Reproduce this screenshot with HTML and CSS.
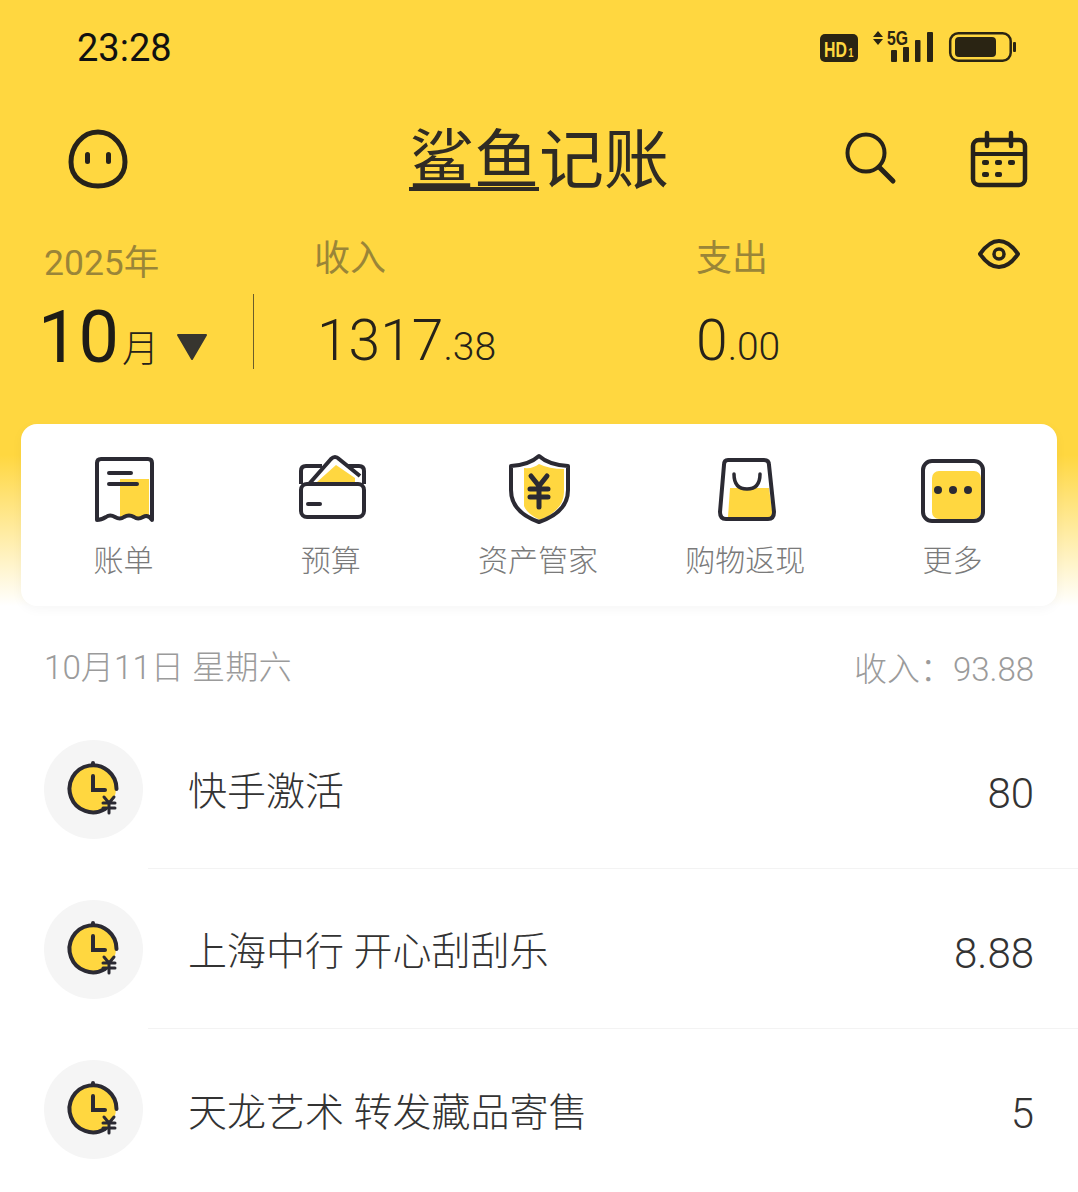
FILE: index.html
```html
<!DOCTYPE html>
<html>
	<head>
		<title>鲨鱼记账</title>
		<meta charset="utf-8" />
		<link rel="stylesheet" href="styles.css">
	</head>
	<body>
		<div id="app">
			<div class="header">
				<div class="status">
					<span class="time">23:28</span>
					<svg class="status-icons" width="200" height="36" viewBox="0 0 200 36">
						<rect x="2" y="6" width="38" height="28" rx="5" fill="#2a2413"/>
						<text class="hd" transform="translate(6 29) scale(.72 1)">HD<tspan class="hd-one" dx="2">1</tspan></text>
						<path d="M55 9 L60 3 L65 9 Z M55 11 L60 17 L65 11 Z" fill="#2a2413"/>
						<text x="69" y="17" class="five-g" textLength="21" lengthAdjust="spacingAndGlyphs">5G</text>
						<rect x="73" y="22" width="6" height="12" rx="1" fill="#2a2413"/>
						<rect x="85" y="19" width="6" height="15" rx="1" fill="#2a2413"/>
						<rect x="97" y="12" width="5.5" height="22" rx="1" fill="#2a2413"/>
						<rect x="109" y="4" width="6" height="30" rx="1" fill="#2a2413"/>
						<rect x="132.2" y="5.2" width="60.5" height="27.5" rx="8" fill="none" stroke="#2a2413" stroke-width="2.5"/>
						<rect x="137" y="9" width="41" height="20" rx="4" fill="#2a2413"/>
						<rect x="195" y="14" width="3" height="10" rx="1" fill="#2a2413"/>
					</svg>
				</div>

				<div class="topbar">
					<div class="topbar-left">
						<svg width="60" height="60" viewBox="0 0 60 60">
							<path d="M30 3 C46 3 57 18 57 33 C57 48 45 57 30 57 C15 57 3 48 3 33 C3 18 14 3 30 3 Z" fill="none" stroke="#26221a" stroke-width="5"/>
							<rect x="17" y="23" width="5" height="12" rx="2.5" fill="#26221a"/>
							<rect x="38" y="23" width="5" height="12" rx="2.5" fill="#26221a"/>
						</svg>
					</div>
					<div class="logo"><span class="logo-under">鲨鱼</span>记账</div>
					<div class="topbar-right">
						<svg class="search" width="52" height="54" viewBox="0 0 52 54">
							<circle cx="21" cy="22" r="18.5" fill="none" stroke="#26221a" stroke-width="4"/>
							<path d="M34 36 L48 50" stroke="#26221a" stroke-width="5" stroke-linecap="round"/>
						</svg>
						<svg width="58" height="58" viewBox="0 0 58 58">
							<rect x="3" y="10" width="52" height="45" rx="6" fill="none" stroke="#26221a" stroke-width="4.5"/>
							<path d="M3 24 H55" stroke="#26221a" stroke-width="4"/>
							<path d="M17 3 V16 M41 3 V16" stroke="#26221a" stroke-width="4.5" stroke-linecap="round"/>
							<rect x="12" y="30" width="7" height="5" rx="2" fill="#26221a"/>
							<rect x="25" y="30" width="7" height="5" rx="2" fill="#26221a"/>
							<rect x="38" y="30" width="7" height="5" rx="2" fill="#26221a"/>
							<rect x="12" y="42" width="7" height="5" rx="2" fill="#26221a"/>
							<rect x="25" y="42" width="7" height="5" rx="2" fill="#26221a"/>
						</svg>
					</div>
				</div>

				<div class="summary">
					<div class="col-date">
						<div class="year">2025年</div>
						<div class="month-row">
							<span class="month-num">10</span><span class="month-unit">月</span>
							<svg class="arrow" width="32" height="28" viewBox="0 0 32 28">
								<path d="M2 2 H30 L16 26 Z" fill="#37352f" stroke="#37352f" stroke-width="2" stroke-linejoin="round"/>
							</svg>
							<div class="divider"></div>
						</div>
					</div>
					<div class="col-money col-income">
						<div class="label">收入</div>
						<div class="money">1317<small>.38</small></div>
					</div>
					<div class="col-money col-spend">
						<div class="label">支出</div>
						<div class="money">0<small>.00</small></div>
					</div>
					<svg class="eye" width="44" height="32" viewBox="0 0 44 32">
						<path d="M3 16 C10 6 16 3 22 3 C28 3 34 6 41 16 C34 26 28 29 22 29 C16 29 10 26 3 16 Z" fill="none" stroke="#26221a" stroke-width="4" stroke-linejoin="round"/>
						<circle cx="22" cy="16" r="5" fill="none" stroke="#26221a" stroke-width="3.5"/>
					</svg>
				</div>

				<div class="card">
					<div class="card-item">
						<svg width="72" height="72" viewBox="0 0 72 72">
							<rect x="31" y="27" width="29" height="38" fill="#ffd740"/>
							<path d="M8 68 V11 Q8 7 12 7 H59 Q63 7 63 11 V68 Q59 62 54 65 Q49 68 45 65 Q40 62 35 65 Q31 68 26 65 Q21 62 17 65 Q12 68 8 68 Z" fill="none" stroke="#2b2a33" stroke-width="4" stroke-linejoin="round"/>
							<path d="M20 21 H42 M20 32 H48" stroke="#2b2a33" stroke-width="4" stroke-linecap="round"/>
						</svg>
						<span>账单</span>
					</div>
					<div class="card-item">
						<svg width="72" height="72" viewBox="0 0 72 72">
							<path d="M21 30 L40 13 L59 26 V30 Z" fill="#ffd740"/>
							<rect x="5" y="32" width="63" height="33" rx="6" fill="none" stroke="#2b2a33" stroke-width="4"/>
							<path d="M5 32 V19 Q5 14 10 14 H26 M52 14 H63 Q68 14 68 19 V32" fill="none" stroke="#2b2a33" stroke-width="4"/>
							<path d="M13 32 L35 7 Q39 3 43 7 L64 24" fill="none" stroke="#2b2a33" stroke-width="4" stroke-linejoin="round"/>
							<path d="M12 52 H24" stroke="#2b2a33" stroke-width="4" stroke-linecap="round"/>
						</svg>
						<span>预算</span>
					</div>
					<div class="card-item">
						<svg width="72" height="72" viewBox="0 0 72 72">
							<path d="M21 16 Q30 17 36 12 Q46 17 61 17 V40 Q61 58 37 68 Q24 62 21 54 Z" fill="#ffd740"/>
							<path d="M36 4 Q46 13 65 14 V38 Q65 60 36 70 Q8 60 8 38 V14 Q26 13 36 4 Z" fill="none" stroke="#2b2a33" stroke-width="4" stroke-linejoin="round"/>
							<path d="M28 24 L36 34 L44 24 M27 37 H45 M27 45 H45 M36 34 V55" fill="none" stroke="#2b2a33" stroke-width="5" stroke-linecap="round"/>
						</svg>
						<span>资产管家</span>
					</div>
					<div class="card-item">
						<svg width="72" height="72" viewBox="0 0 72 72">
							<path d="M20 36 H59 L63 65 H18 Z" fill="#ffd740"/>
							<path d="M18 8 H54 Q59 8 59 13 L64 60 Q64 67 58 67 H16 Q10 67 10 60 L14 13 Q14 8 18 8 Z" fill="none" stroke="#2b2a33" stroke-width="4" stroke-linejoin="round"/>
							<path d="M24 22 Q24 37 37 37 Q50 37 50 22" fill="none" stroke="#2b2a33" stroke-width="3.5" stroke-linecap="round"/>
						</svg>
						<span>购物返现</span>
					</div>
					<div class="card-item">
						<svg width="72" height="72" viewBox="0 0 72 72">
							<rect x="15" y="19" width="49" height="48" rx="7" fill="#ffd740"/>
							<rect x="6" y="9" width="60" height="60" rx="9" fill="none" stroke="#2b2a33" stroke-width="4"/>
							<circle cx="21" cy="38" r="4" fill="#2b2a33"/>
							<circle cx="36" cy="38" r="4" fill="#2b2a33"/>
							<circle cx="51" cy="38" r="4" fill="#2b2a33"/>
						</svg>
						<span>更多</span>
					</div>
				</div>
			</div>

			<div class="day-head">
				<span>10月11日 星期六</span>
				<span class="day-income">收入：93.88</span>
			</div>

			<div class="row">
				<div class="row-icon">
					<svg width="99" height="99" viewBox="0 0 99 99">
						<circle cx="49" cy="49" r="23" fill="#ffd740"/>
						<path d="M61 69 A23.5 23.5 0 1 1 72.5 49" fill="none" stroke="#2b2a33" stroke-width="4" stroke-linecap="round"/>
						<path d="M49 23 V25 M49 36 V50 H61" fill="none" stroke="#2b2a33" stroke-width="4" stroke-linecap="round"/>
						<path d="M60 57 L65 63 L70 57 M59 63 H71 M59 68 H71 M65 63 V73" fill="none" stroke="#2b2a33" stroke-width="3" stroke-linecap="round"/>
					</svg>
				</div>
				<div class="row-body">
					<span class="row-name">快手激活</span>
					<span class="row-amount">80</span>
				</div>
			</div>
			<div class="row">
				<div class="row-icon">
					<svg width="99" height="99" viewBox="0 0 99 99">
						<circle cx="49" cy="49" r="23" fill="#ffd740"/>
						<path d="M61 69 A23.5 23.5 0 1 1 72.5 49" fill="none" stroke="#2b2a33" stroke-width="4" stroke-linecap="round"/>
						<path d="M49 23 V25 M49 36 V50 H61" fill="none" stroke="#2b2a33" stroke-width="4" stroke-linecap="round"/>
						<path d="M60 57 L65 63 L70 57 M59 63 H71 M59 68 H71 M65 63 V73" fill="none" stroke="#2b2a33" stroke-width="3" stroke-linecap="round"/>
					</svg>
				</div>
				<div class="row-body">
					<span class="row-name">上海中行 开心刮刮乐</span>
					<span class="row-amount">8.88</span>
				</div>
			</div>
			<div class="row">
				<div class="row-icon">
					<svg width="99" height="99" viewBox="0 0 99 99">
						<circle cx="49" cy="49" r="23" fill="#ffd740"/>
						<path d="M61 69 A23.5 23.5 0 1 1 72.5 49" fill="none" stroke="#2b2a33" stroke-width="4" stroke-linecap="round"/>
						<path d="M49 23 V25 M49 36 V50 H61" fill="none" stroke="#2b2a33" stroke-width="4" stroke-linecap="round"/>
						<path d="M60 57 L65 63 L70 57 M59 63 H71 M59 68 H71 M65 63 V73" fill="none" stroke="#2b2a33" stroke-width="3" stroke-linecap="round"/>
					</svg>
				</div>
				<div class="row-body">
					<span class="row-name">天龙艺术 转发藏品寄售</span>
					<span class="row-amount">5</span>
				</div>
			</div>
		</div>
	</body>
</html>
```
FILE: styles.css
```css
*{ box-sizing: border-box; }
html, body{ margin: 0; height: 100%; background: #fff; overflow: hidden; }
body{ font-family: Roboto, "Noto Sans CJK SC", sans-serif; }
svg{ display: block; }

#app{ width: 1078px; height: 1192px; overflow: hidden; }

.header{
	height: 606px;
	background: linear-gradient(#ffd740 0, #ffd740 455px, #fff 606px);
}

/* status bar */
.status{
	height: 96px; padding: 0 60px 0 77px;
	display: flex; justify-content: space-between; align-items: center;
}
.time{ font-size: 38px; color: #111; }
.status-icons{ margin-bottom: 4px; }
.hd{ font: bold 22px "Liberation Sans", sans-serif; fill: #ffd740; }
.hd-one{ font-size: 13px; }
.five-g{ font: bold 20px "Liberation Sans", sans-serif; fill: #2a2413; }

/* title row */
.topbar{
	height: 126px;
	display: grid; grid-template-columns: 1fr auto 1fr; align-items: center;
}
.topbar-left{ padding-left: 68px; }
.topbar-right{
	display: flex; justify-content: flex-end; align-items: center; gap: 73px;
	padding-right: 50px;
}
.search{ margin-top: -2px; }
.logo{
	font-family: "Noto Sans CJK SC", sans-serif; font-size: 65px; font-weight: 400;
	line-height: 70px; color: #2f2b24; white-space: nowrap;
	margin-bottom: 8px;
}
.logo-under{ display: inline-block; border-bottom: 4px solid #2f2b24; line-height: 64px; }

/* month and totals */
.summary{
	position: relative; height: 202px; padding-left: 44px;
	display: flex;
}
.col-date{ width: 270px; }
.col-income{ width: 382px; }
.year{ font-size: 35.5px; line-height: 42px; margin-top: 20px; color: #9a8538; }
.month-row{ display: flex; align-items: flex-end; margin-left: -6px; margin-top: 16px; height: 76px; }
.month-num{ font-size: 72px; line-height: 76px; color: #1e1c17; }
.month-unit{ font-size: 37px; font-weight: 300; line-height: 52px; color: #26221a; margin-left: 3px; }
.arrow{ margin: 0 0 15px 17px; }
.divider{ width: 1px; height: 75px; margin: 0 0 7px 45px; background: #6b5c2a; }
.label{ font-size: 36px; line-height: 42px; margin-top: 16px; color: #9a8538; }
.money{ font-size: 57px; font-weight: 300; line-height: 66px; margin-top: 28px; color: #26221a; margin-left: 3px; }
.money small{ font-size: 39px; }
.col-spend .money{ margin-left: 0; }
.eye{ position: absolute; right: 57px; top: 16px; }

/* shortcut card */
.card{
	margin: 0 21px; height: 182px; padding-top: 28px;
	background: #fff; border-radius: 16px;
	box-shadow: 0 3px 12px rgba(0,0,0,0.04);
	display: grid; grid-template-columns: repeat(5, 1fr);
}
.card-item{
	display: flex; flex-direction: column; align-items: center;
	font-size: 30px; line-height: 42px; color: #7a7a7a; font-weight: 300;
}
.card-item span{ margin-top: 16px; margin-left: -2px; }

/* day list */
.day-head{
	height: 124px; padding: 40px 44px 0;
	display: flex; justify-content: space-between;
	font-size: 33.2px; line-height: 44px; font-weight: 300; color: #9b9b9b;
}
.day-income{ font-size: 33px; margin-top: 2px; }

.row{ height: 160px; padding-left: 44px; display: flex; }
.row-icon{
	flex: none; width: 99px; height: 99px; margin-top: 10px;
	background: #f5f5f5; border-radius: 50%;
}
.row-body{
	flex: 1; margin-left: 5px; padding: 0 44px 12px 40px; height: 139px;
	display: flex; justify-content: space-between; align-items: center;
	border-bottom: 1px solid #f3f3f3;
}
.row:last-child .row-body{ border-bottom: none; }
.row-name{ font-size: 39px; font-weight: 300; color: #333; margin-bottom: 10px; }
.row-amount{ font-size: 42px; font-weight: 300; color: #333; }
```
